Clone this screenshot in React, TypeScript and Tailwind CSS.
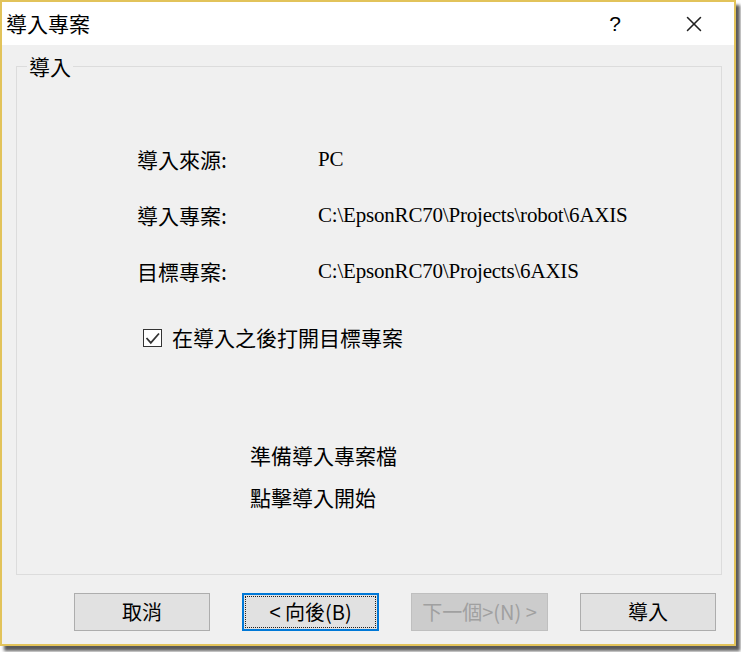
import { X } from 'lucide-react';

const cjk = "font-['Noto_Sans_CJK_TC','Noto_Sans',sans-serif]";
const serif = "font-['Liberation_Serif','DejaVu_Serif',serif]";

const rows = [
  { label: '導入來源:', value: 'PC' },
  { label: '導入專案:', value: 'C:\\EpsonRC70\\Projects\\robot\\6AXIS' },
  { label: '目標專案:', value: 'C:\\EpsonRC70\\Projects\\6AXIS' },
];

const App = () => {
  return (
    <div className="w-[741px] h-[652px] bg-white">
      <div className={`w-[736px] h-[646px] flex flex-col border-2 border-[#e2c35a] shadow-[4px_5px_3px_rgba(0,0,0,0.65)] ${cjk} text-black`}>
        {/* title bar */}
        <div className="h-[43px] bg-white flex items-center pl-[4px] shrink-0">
          <span className="text-[21px] leading-none">導入專案</span>
          <span className="ml-auto mr-[60px] text-[21px] leading-none font-['Liberation_Sans',sans-serif]">?</span>
          <X className="w-[26px] h-[26px] mr-[27px] text-[#222]" strokeWidth={1.4} />
        </div>

        {/* body */}
        <div className="flex-1 bg-[#f0f0f0] flex flex-col">
          <div className="relative mt-[21px] ml-[14px] mr-[12px] h-[509px] border border-[#dcdcdc]">
            <span className="absolute left-[10px] -top-[15px] px-[2px] bg-[#f0f0f0] text-[21px] leading-[28px]">導入</span>

            <div className="pt-[65px] pl-[120px]">
              {rows.map((r) => (
                <div key={r.label} className="h-[56px] flex items-center">
                  <span className="w-[181px] text-[21px]">{r.label}</span>
                  <span className={`${serif} text-[21px] tracking-[-0.2px]`}>{r.value}</span>
                </div>
              ))}

              <div className="mt-[10px] h-[56px] flex items-center pl-[6px]">
                <span className="w-[19px] h-[18px] border border-[#333] bg-white flex items-center justify-center">
                  <svg width="15" height="13" viewBox="0 0 15 13" fill="none">
                    <path d="M1.5 6 L5.8 10.8 L14 1.5" stroke="#333" strokeWidth="1.8" />
                  </svg>
                </span>
                <span className="ml-[10px] text-[21px]">在導入之後打開目標專案</span>
              </div>

              <div className="mt-[77px] pl-[113px] flex flex-col gap-[18px] text-[21px] leading-[24px]">
                <span>準備導入專案檔</span>
                <span>點擊導入開始</span>
              </div>
            </div>
          </div>

          {/* buttons */}
          <div className="mt-[18px] pl-[72px] flex gap-[32px] text-[20px]">
            <button className="w-[136px] h-[38px] bg-[#e1e1e1] border border-[#adadad] flex items-center justify-center">取消</button>
            <button className="w-[137px] h-[38px] bg-[#e1e1e1] border-2 border-[#0078d7] p-[1px]">
              <span className="w-full h-full border border-dotted border-[#222] flex items-center justify-center">
                <span className="font-['Liberation_Sans',sans-serif] mr-[4px]">&lt;</span>向後(B)
              </span>
            </button>
            <button className="w-[137px] h-[38px] bg-[#cccccc] border border-[#bfbfbf] text-[#a0a0a0] flex items-center justify-center">下一個&gt;(N) &gt;</button>
            <button className="w-[136px] h-[38px] bg-[#e1e1e1] border border-[#adadad] flex items-center justify-center">導入</button>
          </div>
        </div>
      </div>
    </div>
  );
};

export default App;
